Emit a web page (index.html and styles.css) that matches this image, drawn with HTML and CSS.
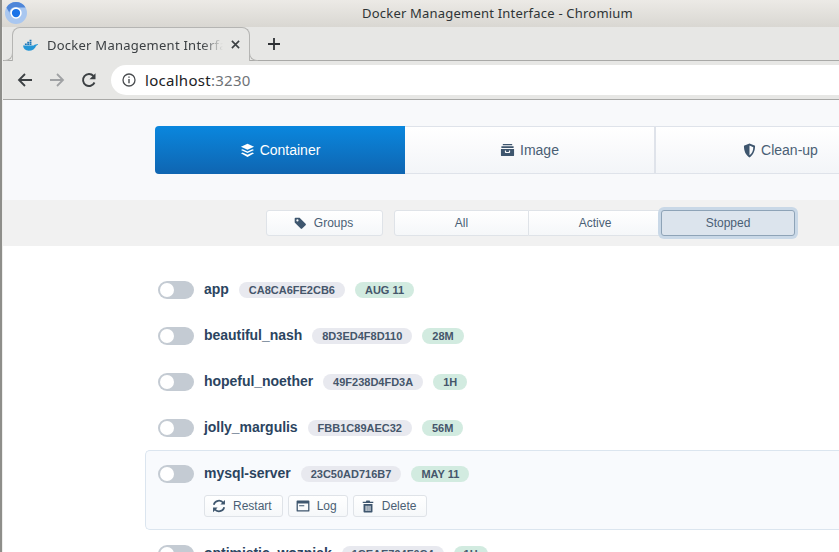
FILE: index.html
```html
<!DOCTYPE html>
<html lang="en">
<head>
<meta charset="utf-8">
<title>Docker Management Interface</title>
<link rel="stylesheet" href="styles.css">
</head>
<body>
<div class="window">
  <header class="titlebar">
    <svg class="chromium" viewBox="0 0 24 24" width="22" height="22"><circle cx="12" cy="12" r="12" fill="#a9c7f0"/><path d="M12 0A12 12 0 0 0 1.600 6L7 15.500a5.500 5.500 0 0 1 5-9.500h10.400A12 12 0 0 0 12 0z" fill="#4f86d8"/><circle cx="12" cy="12" r="6.200" fill="#fff"/><circle cx="12" cy="12" r="4.500" fill="#1a73e8"/></svg>
    <span class="wintitle">Docker Management Interface - Chromium</span>
  </header>
  <div class="tabstrip">
    <div class="tab">
      <svg class="whale" viewBox="0 0 16 12" width="15" height="12"><path d="M0 6.500h11.500c.6-1 1.700-1.300 2.500-1 .6-.8 1.300-.8 2-.5-.3 1-1 1.600-2 1.700C13 10 10 12 6 12 2.500 12 .5 10 0 6.500z" fill="#2496d6"/><path d="M2 4.500h2v1.500H2zM4.500 4.500h2v1.500h-2zM7 4.500h2v1.500H7zM4.500 2.500h2v1.500h-2zM7 2.500h2v1.500H7zM7 .5h2V2H7z" fill="#1b76b8"/></svg>
      <span class="tabtitle">Docker Management Interface</span>
      <svg class="tabclose" viewBox="0 0 10 10" width="9" height="9"><path d="M1 1l8 8M9 1L1 9" stroke="#3c4043" stroke-width="1.800"/></svg>
    </div>
    <svg class="newtab" viewBox="0 0 12 12" width="12" height="12"><path d="M6 0v12M0 6h12" stroke="#2e3134" stroke-width="1.800"/></svg>
  </div>
  <div class="toolbar">
    <svg class="nav" viewBox="0 0 16 16" width="16" height="16"><path d="M15 8H2M8 2L2 8l6 6" fill="none" stroke="#3c4043" stroke-width="1.800"/></svg>
    <svg class="nav" viewBox="0 0 16 16" width="16" height="16"><path d="M1 8h13M8 2l6 6-6 6" fill="none" stroke="#a0a2a4" stroke-width="1.800"/></svg>
    <svg class="nav" viewBox="0 0 16 16" width="16" height="16"><path d="M13.500 10.500A6 6 0 1 1 12.500 4" fill="none" stroke="#3c4043" stroke-width="1.900"/><path d="M14.500 1.200v6h-6z" fill="#3c4043"/></svg>
    <div class="omnibox">
      <svg viewBox="0 0 14 14" width="14" height="14"><circle cx="7" cy="7" r="6" fill="none" stroke="#4a4d50" stroke-width="1.300"/><path d="M7 6v4.200M7 3.500v1.300" stroke="#4a4d50" stroke-width="1.400"/></svg>
      <span class="host">localhost</span><span class="port">:3230</span>
    </div>
  </div>
  <main class="page">
    <nav class="tabs">
      <a class="maintab active">
        <svg class="ico" viewBox="0 0 16 16" width="15" height="15"><path d="M8 .8l7 3.200-7 3.200L1 4zM2.800 6.600L8 9l5.200-2.400L15 7.400 8 10.600 1 7.400zM2.800 10L8 12.400 13.200 10l1.800.8L8 14.800 1 10.800z" fill="#fff"/></svg>Container
      </a>
      <a class="maintab">
        <svg class="ico" viewBox="0 0 16 14" width="15" height="14"><path d="M3 .5h10V2H3zM1.500 3h13v1.800h-13zM1 6h14v6.500a1 1 0 0 1-1 1H2a1 1 0 0 1-1-1zM5.200 7.500v1.500c0 .7.500 1.200 1.200 1.200h3.200c.7 0 1.200-.5 1.200-1.200V7.500H9.500V9h-3V7.500z" fill="#3e566e" fill-rule="evenodd"/></svg>Image
      </a>
      <a class="maintab">
        <svg class="ico" viewBox="0 0 14 16" width="13" height="15"><path d="M7 .5l6 2.400c0 5.500-1.800 10-6 12.600C2.800 13 1 8.400 1 2.900zM7 2.700v10.500c2.700-2 4-5 4.100-8.800z" fill="#3e566e" fill-rule="evenodd"/></svg>Clean-up
      </a>
    </nav>
    <section class="filterbar">
      <button class="btn groups">
        <svg class="ico small" viewBox="0 0 14 14" width="12" height="12"><path d="M.8 1.800A1 1 0 0 1 1.800.8h4.700l7 7a1.200 1.200 0 0 1 0 1.700l-4 4a1.200 1.200 0 0 1-1.700 0l-7-7zM4 2.700a1.300 1.300 0 1 0 0 2.600 1.300 1.300 0 0 0 0-2.600z" fill="#3e566e" fill-rule="evenodd"/></svg>Groups
      </button>
      <div class="segment">
        <button class="seg">All</button>
        <button class="seg">Active</button>
        <button class="seg selected">Stopped</button>
      </div>
    </section>
    <section class="list">
      <div class="row"><div class="line"><span class="toggle"></span><strong class="name">app</strong><span class="pill id">CA8CA6FE2CB6</span><span class="pill age">AUG 11</span></div></div>
      <div class="row"><div class="line"><span class="toggle"></span><strong class="name">beautiful_nash</strong><span class="pill id">8D3ED4F8D110</span><span class="pill age">28M</span></div></div>
      <div class="row"><div class="line"><span class="toggle"></span><strong class="name">hopeful_noether</strong><span class="pill id">49F238D4FD3A</span><span class="pill age">1H</span></div></div>
      <div class="row"><div class="line"><span class="toggle"></span><strong class="name">jolly_margulis</strong><span class="pill id">FBB1C89AEC32</span><span class="pill age">56M</span></div></div>
      <div class="row hovered">
        <div class="line"><span class="toggle"></span><strong class="name">mysql-server</strong><span class="pill id">23C50AD716B7</span><span class="pill age">MAY 11</span></div>
        <div class="actions">
          <button class="btn act"><svg viewBox="0 0 16 16" width="14" height="14"><path d="M2 6.500A6.200 6.200 0 0 1 13 4.500M14 9.500A6.200 6.200 0 0 1 3 11.500" fill="none" stroke="#3e566e" stroke-width="2"/><path d="M14.800 1v5.200H9.600zM1.200 15V9.800h5.200z" fill="#3e566e"/></svg>Restart</button>
          <button class="btn act"><svg viewBox="0 0 16 14" width="14" height="12"><path d="M1.500.5h13a1 1 0 0 1 1 1v11a1 1 0 0 1-1 1h-13a1 1 0 0 1-1-1v-11a1 1 0 0 1 1-1zM2 4v8h12V4zM3.500 6h6v1.300h-6z" fill="#3e566e" fill-rule="evenodd"/></svg>Log</button>
          <button class="btn act"><svg viewBox="0 0 14 16" width="12" height="13"><path d="M5 .5h4l.6 1.500H13.500v1.600H.5V2h3.900zM1.500 5h11v9.500a1 1 0 0 1-1 1h-9a1 1 0 0 1-1-1zM4 7v6.500h1.300V7zM6.400 7v6.500h1.300V7zM8.800 7v6.500h1.300V7z" fill="#3e566e" fill-rule="evenodd"/></svg>Delete</button>
        </div>
      </div>
      <div class="row"><div class="line"><span class="toggle"></span><strong class="name">optimistic_wozniak</strong><span class="pill id">1CEAE794F0C4</span><span class="pill age">1H</span></div></div>
    </section>
  </main>
</div>
</body>
</html>
```

FILE: styles.css
```css
* { box-sizing: border-box; }
html, body { margin: 0; height: 100%; }
body { overflow: hidden; background: #fff; }
.window { width: 839px; height: 552px; overflow: hidden; display: flex; flex-direction: column; padding-left: 1px; border-left: 2px solid #8e8e8a; background: #eeeeec; }
.titlebar { height: 27px; flex: none; margin-left: -1px; padding-left: 154px; background: linear-gradient(#eceae6, #d9d7d2); display: flex; align-items: center; justify-content: center; position: relative; }
.chromium { position: absolute; left: 3px; top: 2px; }
.wintitle { font: 13px "Noto Sans", "Open Sans", sans-serif; letter-spacing: .21px; color: #2e3436; position: relative; top: -1px; }
.tabstrip { height: 34px; flex: none; display: flex; align-items: center; background: #e7e7e5; border-bottom: 1px solid #a9a9a7; }
.tab { width: 238px; height: 34px; margin-left: 9px; margin-bottom: -1px; border: 1px solid #b5b5b3; border-bottom: none; border-radius: 8px 8px 0 0; background: #e7e7e5; display: flex; align-items: center; padding: 0 9px 0 10px; position: relative; }
.tab::before, .tab::after { content: ""; position: absolute; bottom: 0; width: 8px; height: 8px; border-bottom: 1px solid #b5b5b3; background: #e7e7e5; }
.tab::before { left: -9px; border-right: 1px solid #b5b5b3; border-bottom-right-radius: 8px; }
.tab::after { right: -9px; border-left: 1px solid #b5b5b3; border-bottom-left-radius: 8px; }
.whale { flex: none; }
.tabtitle { font: 13px "Noto Sans", sans-serif; color: #3c4043; margin-left: 9px; flex: 1; white-space: nowrap; overflow: hidden; -webkit-mask-image: linear-gradient(90deg, #000 88%, transparent); mask-image: linear-gradient(90deg, #000 88%, transparent); letter-spacing: .25px; }
.tabclose { flex: none; margin-left: 8px; }
.newtab { margin-left: 18px; }
.toolbar { height: 39px; flex: none; display: flex; align-items: center; background: #e7e7e5; border-bottom: 1px solid #a9a9a7; padding-left: 14px; gap: 16px; }
.nav { flex: none; }
.omnibox { width: 740px; height: 30px; margin-left: -2px; border-radius: 15px 0 0 15px; background: #fff; display: flex; align-items: center; padding-left: 11px; font: 15px "Noto Sans", sans-serif; letter-spacing: .28px; margin-right: -30px; }
.omnibox svg { margin-right: 9px; }
.host { color: #202124; }
.port { color: #6f7377; }
.page { flex: 1; min-height: 0; background: #fff; overflow: hidden; }
.tabs { height: 100px; background: #f8f9fb; padding: 26px 0 0 152px; display: flex; }
.maintab { width: 250px; flex: none; height: 48px; display: flex; align-items: center; justify-content: center; gap: 5px; font: 14px "Liberation Sans", sans-serif; color: #4a5f75; background: linear-gradient(#fff, #f3f5f8); border: 1px solid #dfe3ea; border-left-width: 0; }
.maintab.active { background: linear-gradient(#0a87de, #0f65b1); color: #fff; border: 0; border-radius: 4px 0 0 4px; }
.maintab:nth-child(2) { width: 251px; border-right-width: 2px; }
.filterbar { height: 46px; background: #f1f1f1; padding: 10px 0 0 263px; display: flex; align-items: flex-start; gap: 11px; }
.btn { font: 12px "Liberation Sans", sans-serif; color: #4a5f75; background: linear-gradient(#fff, #f5f7f9); border: 1px solid #dfe3e8; border-radius: 3px; display: flex; align-items: center; justify-content: center; padding: 0; }
.groups { width: 117px; height: 26px; gap: 8px; padding-right: 2px; }
.segment { display: flex; height: 26px; }
.seg { width: 133px; height: 26px; font: 12px "Liberation Sans", sans-serif; color: #4a5f75; background: linear-gradient(#fff, #f5f7f9); border: 1px solid #dfe3e8; border-left-width: 0; padding: 0; }
.seg:first-child { width: 135px; border-left-width: 1px; border-radius: 3px 0 0 3px; }
.seg.selected { width: 134px; margin-left: -1px; background: #dce4ed; border: 1px solid #8ea3b7; border-radius: 3px; box-shadow: 0 0 0 3px #c9d8e7; }
.list { padding: 20px 0 0 142px; display: flex; flex-direction: column; }
.row { width: 720px; flex: none; height: 46px; padding: 11px 0 0 12px; border: 1px solid transparent; border-right-width: 0; }
.row.hovered { height: 80px; background: #f8fafd; border-color: #dbe5ef; border-radius: 5px 0 0 5px; }
.line { display: flex; align-items: center; height: 24px; }
.toggle { width: 36px; height: 18px; border-radius: 9px; background: #c4cbd3; position: relative; flex: none; margin-right: 10px; }
.toggle::after { content: ""; position: absolute; left: 2px; top: 2px; width: 14px; height: 14px; border-radius: 50%; background: #fff; }
.name { font: bold 14px "Liberation Sans", sans-serif; letter-spacing: -.04px; color: #2b4460; margin-right: 10px; white-space: nowrap; position: relative; top: -1px; }
.pill { font: bold 11px "Liberation Sans", sans-serif; color: #45566b; height: 16px; line-height: 16px; border-radius: 8px; padding: 0 10px; margin-right: 10px; white-space: nowrap; }
.id { background: #e8e9ef; }
.age { background: #d2ebe0; }
.actions { display: flex; gap: 5px; margin: 9px 0 0 46px; }
.act { height: 22px; gap: 7px; padding: 0 10px 0 7px; background: linear-gradient(#fff, #f6f8fa); }
.act:nth-child(2) { gap: 7px; }
.act:nth-child(3) { gap: 8px; padding-left: 8px; }
```
